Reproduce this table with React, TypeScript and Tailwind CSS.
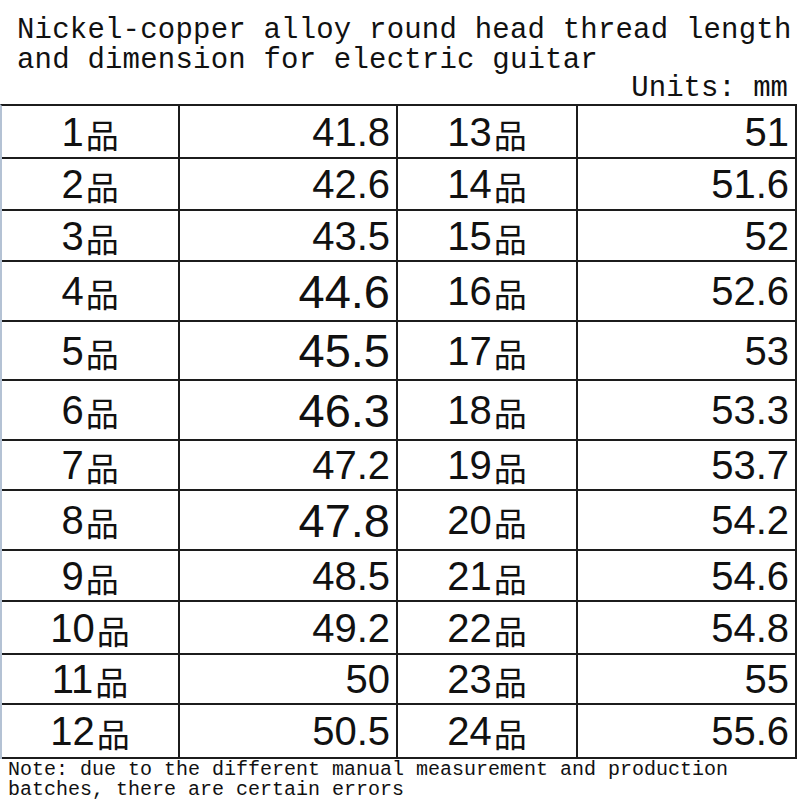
import React from "react";

const rows = [
  { a: "1", b: "41.8", c: "13", d: "51", h: 53 },
  { a: "2", b: "42.6", c: "14", d: "51.6", h: 52 },
  { a: "3", b: "43.5", c: "15", d: "52", h: 51 },
  { a: "4", b: "44.6", c: "16", d: "52.6", h: 60, big: true },
  { a: "5", b: "45.5", c: "17", d: "53", h: 59, big: true },
  { a: "6", b: "46.3", c: "18", d: "53.3", h: 60, big: true },
  { a: "7", b: "47.2", c: "19", d: "53.7", h: 50 },
  { a: "8", b: "47.8", c: "20", d: "54.2", h: 60, big: true },
  { a: "9", b: "48.5", c: "21", d: "54.6", h: 51 },
  { a: "10", b: "49.2", c: "22", d: "54.8", h: 53 },
  { a: "11", b: "50", c: "23", d: "55", h: 50 },
  { a: "12", b: "50.5", c: "24", d: "55.6", h: 54 },
];

const Fret = ({ n }: { n: string }) => (
  <span className="flex items-baseline">
    <span className="text-[40px] leading-none">{n}</span>
    <span className="text-[33px] leading-none font-['Noto_Sans_CJK_SC',sans-serif] ml-[2px] translate-y-[2px]">品</span>
  </span>
);

const App = () => {
  return (
    <div className="w-[800px] h-[800px] bg-white text-[#111] overflow-hidden">
      <div className="pl-[17px] pt-[16px] font-['Liberation_Mono',monospace] text-[29px] leading-[30px] tracking-[0.2px]">
        <p>Nickel-copper alloy round head thread length</p>
        <p>and dimension for electric guitar</p>
      </div>
      <div className="flex justify-end pr-[12px] font-['Liberation_Mono',monospace] text-[29px] leading-[26px]">
        Units: mm
      </div>
      <div className="w-[797px] mt-[2px] border-t-2 border-r-2 border-[#1c1c1c] border-l-2 border-l-[#b4c2d4] font-['Liberation_Sans',sans-serif]">
        {rows.map((r) => (
          <div
            key={r.a}
            className="flex border-b-2 border-[#1c1c1c]"
            style={{ height: r.h }}
          >
            <div className="w-[178px] flex items-center justify-center border-r-2 border-[#1c1c1c]">
              <Fret n={r.a} />
            </div>
            <div className="w-[218px] flex items-center justify-end pr-[6px] border-r-2 border-[#1c1c1c]">
              <span className={r.big ? "text-[47px] leading-none" : "text-[40px] leading-none"}>
                {r.b}
              </span>
            </div>
            <div className="w-[180px] flex items-center justify-center border-r-2 border-[#1c1c1c]">
              <Fret n={r.c} />
            </div>
            <div className="flex-1 flex items-center justify-end pr-[6px]">
              <span className="text-[40px] leading-none">{r.d}</span>
            </div>
          </div>
        ))}
      </div>
      <div className="pl-[8px] pt-[1px] font-['Liberation_Mono',monospace] text-[20px] leading-[20px]">
        <p>Note: due to the different manual measurement and production</p>
        <p>batches, there are certain errors</p>
      </div>
    </div>
  );
};

export default App;
